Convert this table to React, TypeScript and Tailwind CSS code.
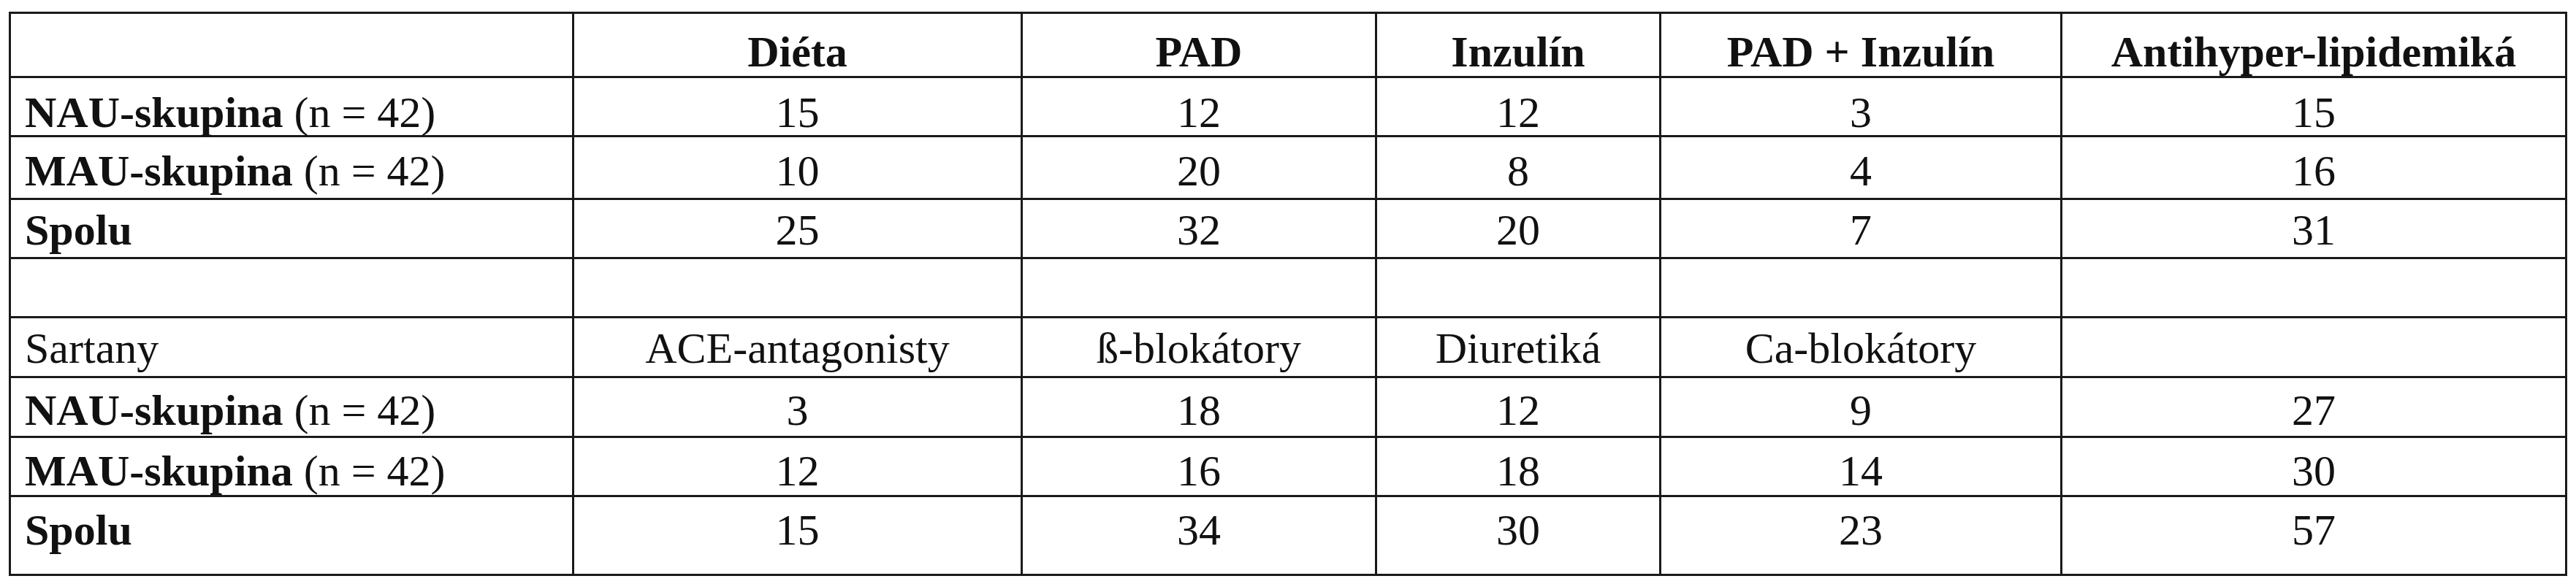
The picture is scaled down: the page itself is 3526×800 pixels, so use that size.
import React from "react";

type Cell = { label?: string; note?: string; bold?: boolean };

const COLS = "grid-cols-[771px_614px_485px_389px_549px_691px]";
const ROWS = "grid-rows-[88px_81px_86px_81px_81px_82px_82px_81px_108px]";

// top padding per row, so the baselines sit where the scan has them
const PADS = ["pt-[22px]", "pt-[17px]", "pt-[16px]", "pt-[11px]", "pt-[14px]", "pt-[11px]", "pt-[14px]", "pt-[15px]", "pt-[15px]"];

const nau: Cell = { label: "NAU-skupina", note: " (n = 42)", bold: true };
const mau: Cell = { label: "MAU-skupina", note: " (n = 42)", bold: true };
const spolu: Cell = { label: "Spolu", bold: true };
const n = (v: string): Cell => ({ label: v });
const h = (v: string): Cell => ({ label: v, bold: true });

const rows: Cell[][] = [
  [{}, h("Diéta"), h("PAD"), h("Inzulín"), h("PAD + Inzulín"), h("Antihyper-lipidemiká")],
  [nau, n("15"), n("12"), n("12"), n("3"), n("15")],
  [mau, n("10"), n("20"), n("8"), n("4"), n("16")],
  [spolu, n("25"), n("32"), n("20"), n("7"), n("31")],
  [{}, {}, {}, {}, {}, {}],
  [n("Sartany"), n("ACE-antagonisty"), n("ß-blokátory"), n("Diuretiká"), n("Ca-blokátory"), {}],
  [nau, n("3"), n("18"), n("12"), n("9"), n("27")],
  [mau, n("12"), n("16"), n("18"), n("14"), n("30")],
  [spolu, n("15"), n("34"), n("30"), n("23"), n("57")],
];

export default function App() {
  return (
    <div className="min-h-screen bg-white pt-[16px] pl-[12px] font-['Liberation_Serif','Times_New_Roman',serif] text-[60px] leading-[60px] text-[#111]">
      <div className={`grid w-fit ${COLS} ${ROWS} border-l-[3px] border-t-[3px] border-[#1a1a1a]`}>
        {rows.map((row, r) =>
          row.map((cell, c) => (
            <div
              key={`${r}-${c}`}
              className={`border-r-[3px] border-b-[3px] border-[#1a1a1a] whitespace-nowrap ${PADS[r]} ${
                c === 0 ? "pl-[19px] text-left" : "text-center"
              }`}
            >
              {cell.label && <span className={cell.bold ? "font-bold" : ""}>{cell.label}</span>}
              {cell.note && <span>{cell.note}</span>}
            </div>
          ))
        )}
      </div>
    </div>
  );
}
